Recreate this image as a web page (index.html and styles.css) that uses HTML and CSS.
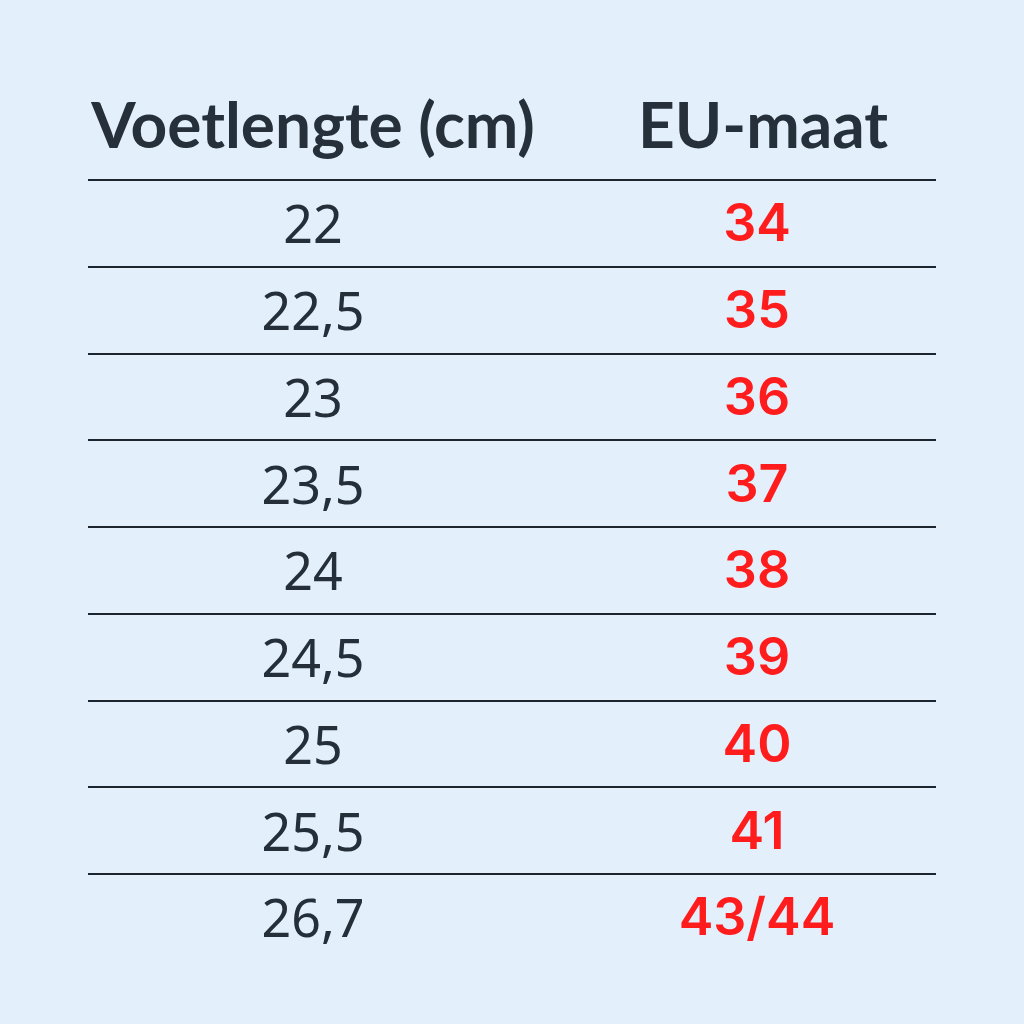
FILE: index.html
```html
<!DOCTYPE html>
<html lang="nl">
<head>
<meta charset="utf-8">
<title>Voetlengte en EU-maat</title>
<link rel="stylesheet" href="styles.css">
</head>
<body>
<div class="table">
  <div class="row head">
    <div class="cell">Voetlengte (cm)</div>
    <div class="cell">EU-maat</div>
  </div>
  <div class="row"><div class="cell cm">22</div><div class="cell eu">34</div></div>
  <div class="row"><div class="cell cm">22,5</div><div class="cell eu">35</div></div>
  <div class="row"><div class="cell cm">23</div><div class="cell eu">36</div></div>
  <div class="row"><div class="cell cm">23,5</div><div class="cell eu">37</div></div>
  <div class="row"><div class="cell cm">24</div><div class="cell eu">38</div></div>
  <div class="row"><div class="cell cm">24,5</div><div class="cell eu">39</div></div>
  <div class="row"><div class="cell cm">25</div><div class="cell eu">40</div></div>
  <div class="row"><div class="cell cm">25,5</div><div class="cell eu">41</div></div>
  <div class="row last"><div class="cell cm">26,7</div><div class="cell eu">43/44</div></div>
</div>
</body>
</html>
```
FILE: styles.css
```css
html, body {
  margin: 0;
  padding: 0;
  background: #e3f0fc;
  width: 1024px;
  height: 1024px;
  overflow: hidden;
}
.table {
  margin-left: 88px;
  width: 848px;
  padding-top: 80px;
  color: #252f39;
  font-family: "Noto Sans", sans-serif;
}
.row {
  display: grid;
  grid-template-columns: 450px 398px;
  height: 84.75px;
  border-bottom: 2px solid #1c252e;
  align-items: center;
}
.row.last {
  border-bottom: none;
}
.row.head {
  height: 99px;
  align-items: start;
}
.cell {
  text-align: center;
  white-space: nowrap;
}
.cell + .cell {
  padding-left: 40px;
}
.head .cell {
  font-family: "Lato", sans-serif;
  font-weight: 700;
  font-size: 64px;
  line-height: 1;
  padding-top: 12px;
  color: #25303a;
}
.head .cell + .cell {
  padding-left: 52px;
}
.cm {
  font-size: 52px;
  font-weight: 400;
  line-height: 1;
}
.eu {
  font-family: "Inter", sans-serif;
  font-size: 52px;
  font-weight: 600;
  line-height: 1;
  color: #ff1c1c;
}
```
